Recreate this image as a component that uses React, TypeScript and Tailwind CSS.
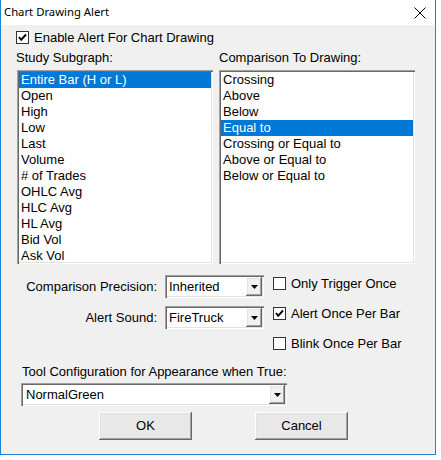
import React from 'react';

const sunken =
  'shadow-[inset_1px_1px_0_#a0a0a0,inset_2px_2px_0_#696969,inset_-1px_-1px_0_#ffffff,inset_-2px_-2px_0_#e3e3e3]';
const raised =
  'shadow-[inset_-1px_-1px_0_#696969,inset_1px_1px_0_#ffffff,inset_-2px_-2px_0_#a0a0a0,inset_2px_2px_0_#e3e3e3]';

const subgraphs = [
  'Entire Bar (H or L)',
  'Open',
  'High',
  'Low',
  'Last',
  'Volume',
  '# of Trades',
  'OHLC Avg',
  'HLC Avg',
  'HL Avg',
  'Bid Vol',
  'Ask Vol',
];

const comparisons = [
  'Crossing',
  'Above',
  'Below',
  'Equal to',
  'Crossing or Equal to',
  'Above or Equal to',
  'Below or Equal to',
];

const CheckBox: React.FC<{ checked?: boolean; label: string }> = ({ checked, label }) => (
  <div className="flex h-[13px] items-center">
    <div className="flex h-[13px] w-[13px] shrink-0 items-center justify-center border border-[#333333] bg-white">
      {checked && (
        <svg width="9" height="9" viewBox="0 0 9 9">
          <path d="M1 4 L3.2 6.8 L8 1.5" fill="none" stroke="#000" strokeWidth="1.9" />
        </svg>
      )}
    </div>
    <span className="ml-[5px] whitespace-nowrap leading-none">{label}</span>
  </div>
);

const ListBox: React.FC<{ items: string[]; selected: number }> = ({ items, selected }) => (
  <div className={`h-[194px] overflow-hidden bg-white p-[2px] ${sunken}`}>
    {items.map((item, i) => (
      <div
        key={item}
        className={`h-[16px] pl-[2px] leading-[16px] whitespace-nowrap ${
          i === selected ? 'bg-[#0078d7] text-white' : ''
        }`}
      >
        {item}
      </div>
    ))}
  </div>
);

const DropArrow = () => (
  <div className={`flex w-[16px] items-center justify-center bg-[#f0f0f0] ${raised}`}>
    <svg width="7" height="4" viewBox="0 0 7 4">
      <path d="M0 0 H7 L3.5 4 Z" fill="#000" />
    </svg>
  </div>
);

const Combo: React.FC<{ value: string; className: string; pad: string }> = ({ value, className, pad }) => (
  <div className={`flex h-[23px] bg-white p-[2px] ${sunken} ${className}`}>
    <div className={`flex flex-1 items-center whitespace-nowrap ${pad}`}>{value}</div>
    <DropArrow />
  </div>
);

const Button: React.FC<{ label: string }> = ({ label }) => (
  <div className={`flex h-[28px] w-[93px] items-center justify-center bg-[#e8e8e8] ${raised}`}>
    {label}
  </div>
);

export default function App() {
  return (
    <div className="min-h-screen bg-white">
      <div className="flex h-[455px] w-[436px] flex-col border-x border-b border-[#1883d7] bg-[#f0f0f0] font-['Liberation_Sans',Arial,sans-serif] text-[13px] text-black">
        {/* Title bar */}
        <div className="flex h-[25px] items-center justify-between bg-white pl-[3px] pr-[8px]">
          <span className="font-['Noto_Sans',sans-serif] text-[11.3px]">Chart Drawing Alert</span>
          <svg width="12" height="12" viewBox="0 0 12 12" className="mr-[1px]">
            <path d="M0.5 0.5 L11.5 11.5 M11.5 0.5 L0.5 11.5" stroke="#000" strokeWidth="1" />
          </svg>
        </div>

        <div className="mt-[6px] pl-[15px]">
          <CheckBox checked label="Enable Alert For Chart Drawing" />
        </div>

        {/* Lists */}
        <div className="mt-[6px] flex gap-[6px] pl-[16px]">
          <div className="w-[196px]">
            <div className="-ml-px h-[16px] leading-[16px]">Study Subgraph:</div>
            <div className="mt-[4px]">
              <ListBox items={subgraphs} selected={0} />
            </div>
          </div>
          <div className="w-[196px]">
            <div className="h-[16px] leading-[16px]">Comparison To Drawing:</div>
            <div className="mt-[4px]">
              <ListBox items={comparisons} selected={3} />
            </div>
          </div>
        </div>

        {/* Options */}
        <div className="mt-[11px] flex pl-[15px]">
          <div className="flex flex-col gap-[8px]">
            <div className="flex items-center">
              <span className="w-[141px] text-right">Comparison Precision:</span>
              <Combo value="Inherited" className="ml-[8px] w-[99px]" pad="pl-[2px]" />
            </div>
            <div className="flex items-center">
              <span className="w-[141px] text-right">Alert Sound:</span>
              <Combo value="FireTruck" className="ml-[8px] w-[99px]" pad="pl-[2px]" />
            </div>
          </div>
          <div className="ml-[9px] mt-[2px] flex flex-col gap-[17px]">
            <CheckBox label="Only Trigger Once" />
            <CheckBox checked label="Alert Once Per Bar" />
            <CheckBox label="Blink Once Per Bar" />
          </div>
        </div>

        <div className="mt-[14px] h-[16px] pl-[21px] leading-[16px]">
          Tool Configuration for Appearance when True:
        </div>
        <div className="mt-[3px] pl-[20px]">
          <Combo value="NormalGreen" className="w-[266px]" pad="pl-[3px]" />
        </div>

        <div className="mt-[6px] flex gap-[63px] pl-[98px]">
          <Button label="OK" />
          <Button label="Cancel" />
        </div>
      </div>
    </div>
  );
}
